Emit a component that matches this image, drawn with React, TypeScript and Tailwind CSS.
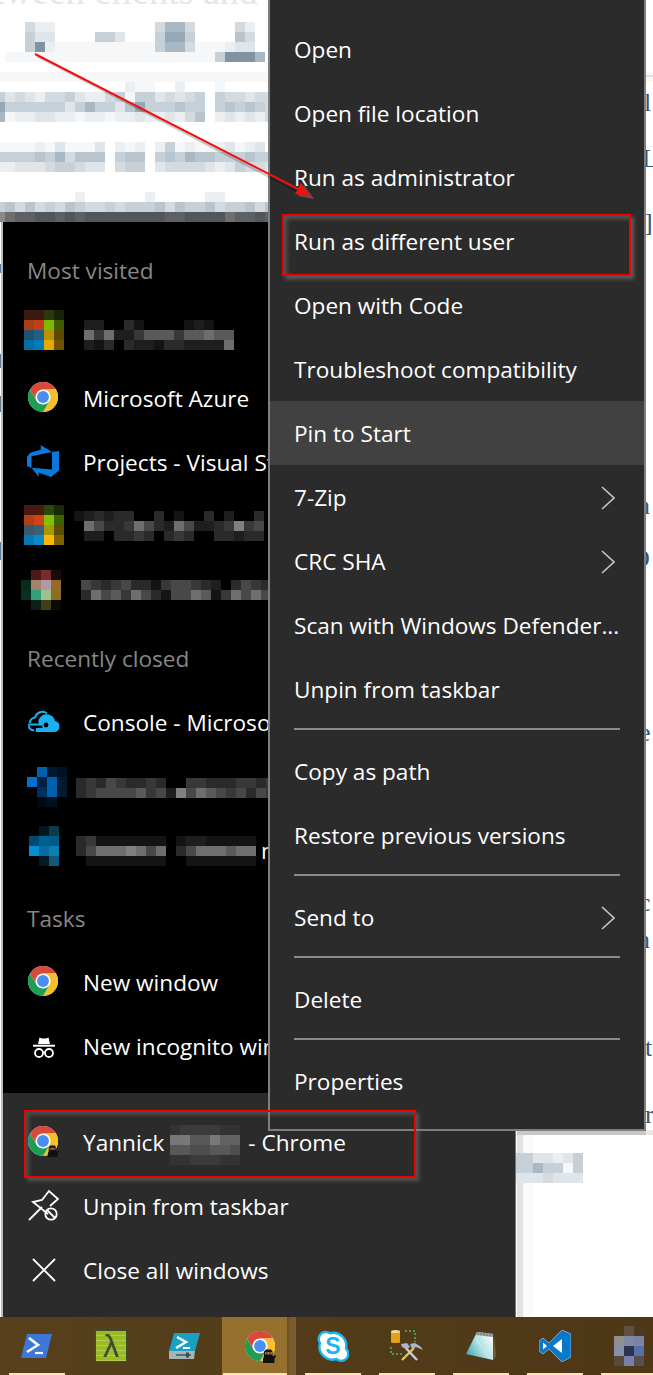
import React from "react";

const BLUE = ["transparent", "#f6f7f8", "#eceff1", "#e0e5e9", "#d3dae0", "#c6d0d8", "#b8c5cf", "#a8b8c4", "#94a8b7", "#7f93a3"];
const GRAY = ["transparent", "#141414", "#1e1e1e", "#2a2a2a", "#383838", "#484848", "#5a5a5a", "#6e6e6e", "#808080", "#8c8c8c"];
const LIFT = ["transparent", "#333333", "#3b3b3b", "#444444", "#4e4e4e", "#585858", "#626262", "#6e6e6e", "#787878", "#828282"];
const EDGE = ["transparent", "#8a8a8a", "#6e6e6e", "#5d6165", "#52575c", "#4a4f54", "#444", "#444", "#444", "#444"];

type MosaicProps = {
  rows: string[];
  palette?: string[];
  x?: number;
  y?: number;
};

// blurred-out parts of the screenshot, one digit per 10px cell
function Mosaic({ rows, palette = GRAY, x, y }: MosaicProps) {
  return (
    <svg x={x} y={y} width={rows[0].length * 10} height={rows.length * 10} className="shrink-0">
      {rows.map((row, r) =>
        row.split("").map((c, i) => (
          <rect key={`${r}-${i}`} x={i * 10} y={r * 10} width="10" height="10" fill={palette[Number(c)]} />
        ))
      )}
    </svg>
  );
}

function ColorMosaic({ rows }: { rows: string[][] }) {
  return (
    <svg width={rows[0].length * 10} height={rows.length * 10} className="shrink-0">
      {rows.map((row, r) =>
        row.map((c, i) => <rect key={`${r}-${i}`} x={i * 10} y={r * 10} width="10" height="10" fill={c} />)
      )}
    </svg>
  );
}

function Chrome({ className }: { className: string }) {
  return (
    <svg viewBox="0 0 48 48" className={className}>
      <circle cx="24" cy="24" r="24" fill="#fff" />
      <path d="M3.2 12A24 24 0 0 1 44.8 12H24A12 12 0 0 0 13.6 30Z" fill="#d9493a" />
      <path d="M44.8 12A24 24 0 0 1 24 48L34.4 30A12 12 0 0 0 24 12Z" fill="#f6c028" />
      <path d="M24 48A24 24 0 0 1 3.2 12L13.6 30A12 12 0 0 0 34.4 30Z" fill="#1f9d55" />
      <circle cx="24" cy="24" r="9.5" fill="#4a8ef0" />
    </svg>
  );
}

function Ninja({ className }: { className: string }) {
  return (
    <svg viewBox="0 0 14 14" className={className}>
      <path d="M2 2.5 4 .5h5l1.5 2v4l1 1 1.5-1.5 1 1-1.5 3V14H1v-4L2 7Z" fill="#111" />
      <rect x="3" y="3.2" width="7" height="2.2" fill="#c9744a" />
      <rect x="4" y="3.7" width="1.5" height="1" fill="#222" />
      <rect x="7.5" y="3.7" width="1.5" height="1" fill="#222" />
    </svg>
  );
}

function DevOps({ className }: { className?: string }) {
  return (
    <svg viewBox="0 0 18 18" className={className}>
      <path
        d="M17 4v9.74l-4 3.28-6.2-2.26V17l-3.51-4.59 10.23.8V4.44L17 4zm-3.41.49L7.85 1v2.35L2.58 4.89 1 6.93v4.63l2.26 1V6.57l10.33-2.08z"
        fill="#0a78dc"
      />
    </svg>
  );
}

function AzureCloud() {
  return (
    <svg width="34" height="24" viewBox="0 0 34 24">
      <path d="M9 22H27a5.5 5.5 0 0 0 1-10.9A8.5 8.5 0 0 0 13 7.5 6 6 0 0 0 12 14H20v4H9Z" fill="#1bb0f0" />
      <path d="M3 13A5.5 5.5 0 0 1 8 7.5 7.5 7.5 0 0 1 20 3.5" fill="none" stroke="#1bb0f0" strokeWidth="2" />
      <path d="M1 14.5H18" fill="none" stroke="#1bb0f0" strokeWidth="2" />
      <path d="M2 15.5A4 4 0 0 0 7 20" fill="none" stroke="#1bb0f0" strokeWidth="2" />
      <circle cx="19" cy="15" r="3.2" fill="#000" stroke="#1bb0f0" strokeWidth="1.6" />
    </svg>
  );
}

function Incognito() {
  return (
    <svg width="24" height="24" viewBox="0 0 24 24" fill="none" stroke="#fff" className="translate-y-[1px]">
      <path d="M6 9 7.5 2.5 10 3.5h4l2.5-1L18 9Z" fill="#fff" stroke="none" />
      <path d="M1 10.7H23" strokeWidth="2" />
      <circle cx="7" cy="18" r="4" strokeWidth="1.8" />
      <circle cx="17" cy="18" r="4" strokeWidth="1.8" />
      <path d="M11 17.5h2" strokeWidth="1.6" />
    </svg>
  );
}

function UnpinIcon() {
  return (
    <svg width="32" height="34" viewBox="0 0 32 34" fill="none" stroke="#fff" strokeWidth="1.8">
      <path d="M1 31 14 18" />
      <path d="M20 25 5 13l9-2 7-9 9 8-8 7" />
      <circle cx="23" cy="25" r="5.7" />
      <path d="M19 21l8 8" />
    </svg>
  );
}

function CloseIcon() {
  return (
    <svg width="24" height="24" viewBox="0 0 24 24" stroke="#fff" strokeWidth="1.8" fill="none">
      <path d="M1 1 23 23M23 1 1 23" />
    </svg>
  );
}

function Chevron() {
  return (
    <svg width="14" height="24" viewBox="0 0 14 24" fill="none" stroke="#c8c8c8" strokeWidth="1.6" className="translate-y-[1px]">
      <path d="M1 1 13 12 1 23" />
    </svg>
  );
}

function JumpRow({ icon, children }: { icon: React.ReactNode; children: React.ReactNode }) {
  return (
    <div className="flex h-16 items-center pl-[21px] text-white">
      <div className="flex w-[40px] shrink-0 items-center justify-center">{icon}</div>
      <div className="relative top-[1px] ml-[19px] flex items-center whitespace-nowrap">{children}</div>
    </div>
  );
}

function JumpHeader({ children, className }: { children: React.ReactNode; className: string }) {
  return <div className={`flex items-center pl-[24px] text-[#868686] ${className}`}>{children}</div>;
}

function JumpList() {
  return (
    <div className="absolute left-[1px] top-[222px] flex h-[1095px] w-[515px] flex-col border-l-2 border-r border-l-[#bdbdbd] border-r-[#777] bg-[#2b2b2b]">
      <div className="h-[871px] bg-black">
        <div className="w-[265px] overflow-hidden">
          <JumpHeader className="h-[80px] pt-[18px]">Most visited</JumpHeader>
          <JumpRow
            icon={
              <div className="-translate-y-[4px]">
                <ColorMosaic
                  rows={[
                    ["#3a1a10", "#3a1a10", "#2a3a0a", "#1a2208"],
                    ["#a83e18", "#c23e18", "#7fb800", "#3f5a00"],
                    ["#22506e", "#22607e", "#b89000", "#5a4a00"],
                    ["#0070a8", "#007cb8", "#e8a800", "#705000"],
                  ]}
                />
              </div>
            }
          >
            <div className="ml-[1px]">
              <Mosaic rows={["220031000012100", "747224666466766", "213032213322227"]} />
            </div>
          </JumpRow>
          <JumpRow icon={<Chrome className="h-[30px] w-[30px] -translate-x-[1px] -translate-y-[1px]" />}>Microsoft Azure</JumpRow>
          <JumpRow icon={<DevOps className="h-[36px] w-[36px] -translate-x-[1px] -translate-y-[1px]" />}>Projects - Visual Studio</JumpRow>
          <JumpRow
            icon={
              <div className="-translate-y-[1px]">
                <ColorMosaic
                  rows={[
                    ["#4a1a10", "#4a1a10", "#2a4a0a", "#1a2a08"],
                    ["#b04018", "#cc4418", "#80c000", "#3f6000"],
                    ["#38586e", "#3a6078", "#a89800", "#5a4c00"],
                    ["#0878b4", "#088cc8", "#ffb800", "#806000"],
                  ]}
                />
              </div>
            }
          >
            <div className="-ml-[9px] -translate-y-[1px]">
              <Mosaic rows={["1232330030100302003", "0753347532752234845", "0220334303430033233"]} />
            </div>
          </JumpRow>
          <JumpRow
            icon={
              <div className="-translate-x-[3px]">
                <ColorMosaic
                  rows={[
                    ["#000000", "#4a1a1a", "#7a2a28", "#1a0a0a"],
                    ["#0a2a1a", "#a88070", "#b098a8", "#986a28"],
                    ["#0a3020", "#30a078", "#a0c090", "#887020"],
                    ["#000000", "#0a2018", "#404018", "#0a0a08"],
                  ]}
                />
              </div>
            }
          >
            <div className="-ml-[2px] -translate-y-[1px]">
              <Mosaic rows={["5434533145543203543", "3756475315576147575"]} />
            </div>
          </JumpRow>
          <JumpHeader className="h-[68px] pt-[6px]">Recently closed</JumpHeader>
          <JumpRow icon={<AzureCloud />}>Console - Microsoft Azure</JumpRow>
          <JumpRow
            icon={
              <div className="translate-x-[3px] translate-y-[1px]">
                <ColorMosaic
                  rows={[
                    ["#000000", "#0060b0", "#001830", "#001020"],
                    ["#0070d0", "#002040", "#0060b0", "#001a30"],
                    ["#000000", "#003060", "#0060b0", "#001a30"],
                    ["#000000", "#000a14", "#00101c", "#000000"],
                  ]}
                />
              </div>
            }
          >
            <div className="-ml-[7px] flex translate-y-[1px] items-center">
              <Mosaic rows={["34354334300443334434", "34555564528576545354"]} />
              <span className="ml-[-6px] -translate-y-[1px]">a</span>
            </div>
          </JumpRow>
          <JumpRow
            icon={
              <div className="-translate-y-[4px]">
                <ColorMosaic
                  rows={[
                    ["#000000", "#001820", "#0f3a4a"],
                    ["#004a70", "#006090", "#005a8a"],
                    ["#0090d0", "#0a6aa0", "#0a80b0"],
                    ["#000000", "#001a28", "#0f5a78"],
                  ]}
                />
              </div>
            }
          >
            <div className="-ml-[7px] flex items-center">
              <Mosaic rows={["341111111012211111", "357778757035777677", "011111111001111111"]} />
              <span className="ml-[5px]">n</span>
            </div>
          </JumpRow>
          <JumpHeader className="h-[68px] pt-[6px]">Tasks</JumpHeader>
          <JumpRow icon={<Chrome className="h-[30px] w-[30px] -translate-x-[1px] -translate-y-[1px]" />}>New window</JumpRow>
          <JumpRow icon={<Incognito />}>New incognito window</JumpRow>
        </div>
      </div>
      <div className="pt-[17px]">
        <JumpRow
          icon={
            <div className="relative h-[30px] w-[30px] -translate-x-[1px] -translate-y-[1px]">
              <Chrome className="h-[30px] w-[30px]" />
              <Ninja className="absolute -bottom-[1px] -right-[1px] h-[12px] w-[12px]" />
            </div>
          }
        >
          <span>Yannick</span>
          <span className="ml-[6px] translate-y-[2px]">
            <Mosaic rows={["1222211", "8855866", "5544554", "1122211"]} palette={LIFT} />
          </span>
          <span className="ml-[8px]">- Chrome</span>
        </JumpRow>
        <JumpRow icon={<UnpinIcon />}>Unpin from taskbar</JumpRow>
        <JumpRow icon={<CloseIcon />}>Close all windows</JumpRow>
      </div>
    </div>
  );
}

function MenuItem({ label, arrow, hot }: { label: string; arrow?: boolean; hot?: boolean }) {
  return (
    <div className={`flex h-16 items-center justify-between pl-[24px] pr-[29px] text-white ${hot ? "bg-[#414141]" : ""}`}>
      <span className="relative top-[1px] whitespace-nowrap">{label}</span>
      {arrow && <Chevron />}
    </div>
  );
}

function MenuSeparator() {
  return (
    <div className="flex h-[18px] items-start pl-[24px] pr-[24px] pt-[7px]">
      <div className="h-[2px] w-full bg-[#8a8a8a]" />
    </div>
  );
}

function ContextMenu() {
  return (
    <div className="absolute left-[268px] top-0 w-[378px] border-x-2 border-b-2 border-[#7f7f7f] bg-[#2b2b2b] pb-[16px] pt-[17px]">
      <MenuItem label="Open" />
      <MenuItem label="Open file location" />
      <MenuItem label="Run as administrator" />
      <MenuItem label="Run as different user" />
      <MenuItem label="Open with Code" />
      <MenuItem label="Troubleshoot compatibility" />
      <MenuItem label="Pin to Start" hot />
      <MenuItem label="7-Zip" arrow />
      <MenuItem label="CRC SHA" arrow />
      <MenuItem label="Scan with Windows Defender..." />
      <MenuItem label="Unpin from taskbar" />
      <MenuSeparator />
      <MenuItem label="Copy as path" />
      <MenuItem label="Restore previous versions" />
      <MenuSeparator />
      <MenuItem label="Send to" arrow />
      <MenuSeparator />
      <MenuItem label="Delete" />
      <MenuSeparator />
      <MenuItem label="Properties" />
    </div>
  );
}

function PowerShell() {
  return (
    <svg width="34" height="26" viewBox="0 0 34 26">
      <path d="M7 1H32L26 25H1Z" fill="#3d78d8" />
      <path d="M9 5 18 12 7 19" fill="none" stroke="#fff" strokeWidth="2.6" />
      <path d="M15 20H23" stroke="#fff" strokeWidth="2.2" />
    </svg>
  );
}

function PowerShellIse() {
  return (
    <svg width="34" height="28" viewBox="0 0 34 28">
      <path d="M6 1H32L27 19H1Z" fill="#1c9fc4" />
      <path d="M9 5 18 10 8 16" fill="none" stroke="#fff" strokeWidth="2.4" />
      <path d="M15 16H22" stroke="#fff" strokeWidth="2" />
      <path d="M1 19H27L26 27H1Z" fill="#a5b5b5" />
      <path d="M8 23H23" stroke="#4c5a5a" strokeWidth="1.6" />
      <rect x="18" y="20.5" width="3" height="5" fill="#3c4a4a" />
    </svg>
  );
}

function LambdaTile() {
  return (
    <div className="flex h-[32px] w-[32px] items-center justify-center border border-[#3f4f33] bg-[repeating-linear-gradient(to_bottom,#9cbb22_0,#9cbb22_4px,#b4cc55_4px,#b4cc55_5px)] font-['Liberation_Sans',sans-serif] text-[32px] leading-none text-[#3b4a30]">
      λ
    </div>
  );
}

function Skype() {
  return (
    <svg width="32" height="32" viewBox="0 0 32 32">
      <path
        d="M9 2a7 7 0 0 1 4 1.3A13 13 0 0 1 29 18.5 7 7 0 0 1 19.5 29 13 13 0 0 1 3 13 7 7 0 0 1 9 2Z"
        fill="#fff"
        stroke="#1bb5f0"
        strokeWidth="2.4"
      />
      <text x="16" y="24" textAnchor="middle" fontSize="23" fontWeight="700" fill="#1bb5f0" fontFamily="'Liberation Sans', sans-serif">
        S
      </text>
    </svg>
  );
}

function DbTools() {
  return (
    <svg width="34" height="34" viewBox="0 0 34 34">
      <rect x="1" y="2" width="9" height="12" rx="1.5" fill="#e0a020" />
      <ellipse cx="5.5" cy="2.5" rx="4.5" ry="1.5" fill="#f5dd90" />
      <path d="M15 2h10v11M1 18v7h12" fill="none" stroke="#3fa34d" strokeWidth="2" strokeDasharray="2 2" />
      <path d="M12 31 24 19" stroke="#e6c25a" strokeWidth="2.4" />
      <path d="M14 17 27 31" stroke="#c6d0e0" strokeWidth="2.4" />
      <path d="M11 15l6-1 3 4-3 2-5-2ZM20 15l5-1 6 4 2 3-7-3-4 2Z" fill="#aab6cc" />
    </svg>
  );
}

function Notepad() {
  return (
    <svg width="32" height="30" viewBox="0 0 32 30">
      <defs>
        <linearGradient id="pad" x1="0" y1="1" x2="1" y2="0.4">
          <stop offset="0" stopColor="#2f9aa5" />
          <stop offset="0.55" stopColor="#a5dde0" />
          <stop offset="1" stopColor="#eef6f6" />
        </linearGradient>
      </defs>
      <path d="M29 3 31 25 28 29Z" fill="#7a6030" />
      <path d="M12 1 28 3 28 29 1 23Z" fill="url(#pad)" />
      <path d="M12 1 28 3 28 6 11 4Z" fill="#9aa5aa" />
      <path d="M13 1v3M16 1.4v3M19 1.8v3M22 2.2v3M25 2.6v3" stroke="#5d676c" strokeWidth="0.8" />
      <path d="M11 8 24 27" stroke="#d8eeee" strokeWidth="0.8" />
    </svg>
  );
}

function VsCode() {
  return (
    <svg width="32" height="32" viewBox="0 0 32 32">
      <path d="M23 0 32 4V27L23 32 10 19 4 24 0 21V11L4 8 10 13Z" fill="#0a78c8" stroke="#c8d4dc" strokeWidth="0.6" />
      <path d="M23 9V23L14 16Z" fill="#fff" />
      <path d="M4 12.5 8 16 4 19.5Z" fill="#fff" />
    </svg>
  );
}

function Slot({ icon, under, active }: { icon: React.ReactNode; under?: boolean; active?: boolean }) {
  return (
    <div className={`relative flex h-[58px] w-[74px] shrink-0 items-center justify-center ${active ? "bg-[#96702f] pl-[1px]" : ""}`}>
      {active && <div className="absolute inset-y-0 right-0 w-[9px] border-l-2 border-[#6f5225] bg-[#7c5c2a]" />}
      <div className="relative -mt-[1px]">{icon}</div>
      {under && <div className={`absolute bottom-0 h-[2px] bg-[#fde2b8] ${active ? "left-[1px] w-[64px]" : "w-[56px]"}`} />}
    </div>
  );
}

function Taskbar() {
  return (
    <div className="absolute bottom-0 left-0 flex h-[58px] w-[653px] overflow-hidden bg-gradient-to-r from-[#57401b] to-[#4d3717]">
      <Slot icon={<PowerShell />} under />
      <Slot icon={<LambdaTile />} />
      <Slot icon={<PowerShellIse />} />
      <Slot
        active
        under
        icon={
          <div className="relative h-[30px] w-[30px]">
            <Chrome className="h-[30px] w-[30px]" />
            <Ninja className="absolute -bottom-[2px] -right-[1px] h-[14px] w-[14px]" />
          </div>
        }
      />
      <Slot icon={<Skype />} under />
      <Slot icon={<DbTools />} under />
      <Slot icon={<Notepad />} under />
      <Slot icon={<VsCode />} under />
      <Slot
        under
        icon={
          <ColorMosaic
            rows={[
              ["#4f3816", "#5f5040", "#4a3a1e"],
              ["#8f8f8f", "#7e88a0", "#7a85a5"],
              ["#8890a8", "#2a3350", "#5a6ea8"],
              ["#574a38", "#7880a8", "#55504e"],
            ]}
          />
        }
      />
    </div>
  );
}

// the page behind the menus, pixelated in the screenshot
function Backdrop() {
  return (
    <svg width="653" height="1375" className="absolute left-0 top-0">
      <Mosaic
        x={5}
        y={22}
        palette={BLUE}
        rows={[
          "00422000000000047740000420",
          "00533000055300058850000640",
          "00592111111111157741112330",
          "11111111111111111111159997",
        ]}
      />
      <rect x="0" y="72" width="653" height="10" fill="#f7f7f7" />
      <rect x="646" y="75" width="7" height="2" fill="#d5e0e8" />
      <Mosaic
        x={-5}
        y={82}
        palette={BLUE}
        rows={[
          "0000000000000211002000100000",
          "5343244532245155343450544344",
          "8555555357553685556550565654",
          "7122332212212232232460232324",
        ]}
      />
      <Mosaic
        x={-5}
        y={142}
        palette={BLUE}
        rows={[
          "1111213111302120251211231230",
          "5555657466605660565766555655",
          "2233345543304550344443235443",
        ]}
      />
      <Mosaic
        x={-5}
        y={192}
        palette={BLUE}
        rows={["0000000020000002000002200000", "5646454654454555646556455646"]}
      />
      <Mosaic x={-5} y={212} palette={EDGE} rows={["1233443434444444433444423343"]} />
      <rect x="517" y="1130" width="129" height="5" fill="#c8c8c8" />
      <rect x="646" y="1130" width="7" height="5" fill="#e8e8e8" />
      <rect x="517" y="1135" width="6" height="182" fill="#e2e2e2" />
      <rect x="523" y="1135" width="10" height="182" fill="#fafafa" />
      <Mosaic x={513} y={1153} palette={BLUE} rows={["5533235", "5575515", "3334333"]} />
      <rect x="0" y="264" width="1" height="9" fill="#5a7a95" />
      <rect x="0" y="354" width="1" height="14" fill="#5a7a95" />
      <rect x="0" y="396" width="1" height="16" fill="#5a7a95" />
      <rect x="0" y="542" width="1" height="18" fill="#5a7a95" />
    </svg>
  );
}

function StrayText() {
  const letter = "absolute font-['Liberation_Serif',serif] text-[26px] leading-[30px] text-[#36566f]";
  return (
    <>
      <div className="absolute -left-[6px] -top-[29px] whitespace-nowrap font-['Liberation_Serif',serif] text-[38px] leading-[40px] text-[#e6e6e6]">
        tween clients and
      </div>
      <span className={`${letter} left-[644px] top-[88px]`}>l</span>
      <span className={`${letter} left-[642px] top-[144px]`}>L</span>
      <span className={`${letter} left-[644px] top-[208px]`}>]</span>
      <span className={`${letter} left-[637px] top-[491px]`}>n</span>
      <span className={`${letter} left-[631px] top-[544px]`}>D</span>
      <span className={`${letter} left-[639px] top-[718px]`}>e</span>
      <span className={`${letter} left-[639px] top-[888px] text-[#8fa3b3]`}>c</span>
      <span className={`${letter} left-[637px] top-[925px]`}>n</span>
      <span className={`${letter} left-[645px] top-[1033px]`}>t</span>
      <span className={`${letter} left-[645px] top-[1100px]`}>r</span>
    </>
  );
}

function Annotations() {
  return (
    <>
      <svg width="653" height="300" className="pointer-events-none absolute left-0 top-0">
        <path d="M35 54 300 192" stroke="#000" strokeOpacity="0.2" strokeWidth="2" transform="translate(2 2)" />
        <path d="M314 199 298 196 304 185Z" fill="#555" />
        <path d="M35 54 302 191" stroke="#f01010" strokeWidth="2" />
        <path d="M311 197 295 194 301 183Z" fill="#f01010" />
      </svg>
      <div className="pointer-events-none absolute left-[282px] top-[214px] h-[62px] w-[349px] border-[2px] border-[#f00000] shadow-[3px_3px_4px_rgba(130,130,130,0.6),inset_3px_3px_4px_rgba(130,130,130,0.5)]" />
      <div className="pointer-events-none absolute left-[24px] top-[1110px] h-[68px] w-[392px] border-[2px] border-[#f00000] shadow-[3px_3px_4px_rgba(130,130,130,0.5),inset_3px_3px_4px_rgba(130,130,130,0.4)]" />
    </>
  );
}

export default function App() {
  return (
    <div className="relative h-[1375px] w-[653px] overflow-hidden bg-white font-['Open_Sans','Noto_Sans',sans-serif] text-[22.6px] leading-[30px]">
      <Backdrop />
      <StrayText />
      <JumpList />
      <ContextMenu />
      <Taskbar />
      <Annotations />
    </div>
  );
}
